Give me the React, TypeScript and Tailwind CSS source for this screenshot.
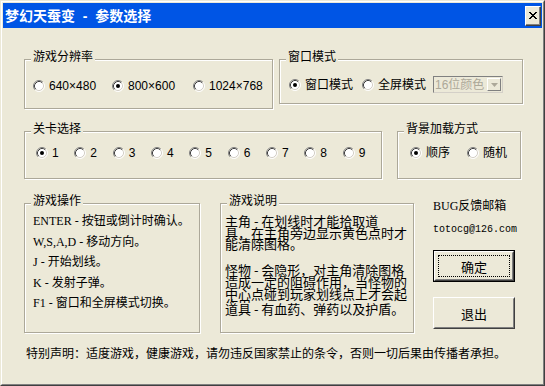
const Radio = ({ checked = false }: { checked?: boolean }) => (
  <svg width="12" height="12" viewBox="0 0 12 12" className="shrink-0">
    <circle cx="6" cy="6" r="5" fill="#fff" />
    <path d="M2.11 9.89 A5.5 5.5 0 0 1 9.89 2.11" stroke="#808080" fill="none" />
    <path d="M9.89 2.11 A5.5 5.5 0 0 1 2.11 9.89" stroke="#fff" fill="none" />
    <path d="M2.82 9.18 A4.5 4.5 0 0 1 9.18 2.82" stroke="#404040" fill="none" />
    <path d="M9.18 2.82 A4.5 4.5 0 0 1 2.82 9.18" stroke="#d4d0c8" fill="none" />
    {checked && <circle cx="6" cy="6" r="2" fill="#000" />}
  </svg>
);

const RadioItem = ({ label, checked, className }: { label: string; checked?: boolean; className?: string }) => (
  <div className={`flex items-center gap-[4px] ${className ?? ''}`}>
    <Radio checked={checked} />
    <span className="whitespace-nowrap text-[12px] leading-[14px]">{label}</span>
  </div>
);

const Group = ({ label, className, children }: { label: string; className: string; children?: React.ReactNode }) => (
  <div className={`relative border border-[#aca899] shadow-[inset_1px_1px_0_#fff,1px_1px_0_#fff] ${className}`}>
    <span className="absolute left-[6px] top-[-10px] bg-[#ece9d8] px-[2px] text-[12px] leading-[14px] whitespace-nowrap">
      {label}
    </span>
    {children}
  </div>
);

// marlett style close glyph
const CloseGlyph = () => {
  const rows = ['##....##', '.##..##.', '..####..', '...##...', '..####..', '.##..##.', '##....##'];
  return (
    <svg width="8" height="7" viewBox="0 0 8 7" shapeRendering="crispEdges">
      {rows.map((r, y) =>
        r.split('').map((c, x) => (c === '#' ? <rect key={`${x}-${y}`} x={x} y={y} width="1" height="1" fill="#000" /> : null))
      )}
    </svg>
  );
};

const levels = ['1', '2', '3', '4', '5', '6', '7', '8', '9'];

export default function App() {
  return (
    <div className="h-[386px] w-[545px] border border-t-[#ece9d8] border-l-[#ece9d8] border-r-[#404040] border-b-[#404040] font-['Liberation_Sans','Noto_Sans_CJK_SC',sans-serif] text-black">
      <div className="h-full w-full border border-t-white border-l-white border-r-[#808080] border-b-[#808080] bg-[#ece9d8] p-[1px]">
        {/* title bar */}
        <div className="flex h-[25px] items-center justify-between bg-[#0055e5] pl-[2px] pr-[1px]">
          <span className="whitespace-pre text-[14px] font-bold leading-[18px] text-white">梦幻天蚕变  -  参数选择</span>
          <div className="flex h-[20px] w-[16px] items-center justify-center border border-t-white border-l-white border-r-[#404040] border-b-[#404040] bg-[#ece9d8] shadow-[inset_-1px_-1px_0_#808080]">
            <CloseGlyph />
          </div>
        </div>

        <div className="pl-[21px] pt-[31px]">
          {/* row 1 */}
          <div className="flex items-start">
            <Group label="游戏分辨率" className="h-[50px] w-[249px]">
              <div className="flex pl-[8px] pt-[19px]">
                <RadioItem label="640×480" className="w-[79px]" />
                <RadioItem label="800×600" checked className="w-[81px]" />
                <RadioItem label="1024×768" />
              </div>
            </Group>
            <Group label="窗口模式" className="ml-[6px] h-[45px] w-[244px]">
              <div className="flex items-center pl-[9px] pt-[16px]">
                <RadioItem label="窗口模式" checked className="w-[73px]" />
                <RadioItem label="全屏模式" className="w-[71px]" />
                <div className="flex h-[17px] w-[70px] items-center border border-t-[#808080] border-l-[#808080] border-r-[#d4d0c8] border-b-[#d4d0c8] bg-[#ece9d8]">
                  <span className="flex-1 pl-[1px] text-[12px] leading-[14px] text-[#aca899] whitespace-nowrap">16位颜色</span>
                  <span className="mr-[1px] flex h-[13px] w-[14px] items-center justify-center border border-t-white border-l-white border-r-[#808080] border-b-[#808080] bg-[#ece9d8]">
                    <svg width="7" height="4" viewBox="0 0 7 4">
                      <path d="M0 0 H7 L3.5 4 Z" fill="#aca899" />
                    </svg>
                  </span>
                </div>
              </div>
            </Group>
          </div>

          {/* row 2 */}
          <div className="mt-[22px] flex items-start">
            <Group label="关卡选择" className="h-[48px] w-[358px]">
              <div className="flex pl-[11px] pt-[14px]">
                {levels.map((l) => (
                  <RadioItem key={l} label={l} checked={l === '1'} className="w-[39px]" />
                ))}
              </div>
            </Group>
            <Group label="背景加载方式" className="ml-[15px] h-[48px] w-[124px]">
              <div className="flex pl-[12px] pt-[14px]">
                <RadioItem label="顺序" checked className="w-[57px]" />
                <RadioItem label="随机" />
              </div>
            </Group>
          </div>

          {/* row 3 */}
          <div className="mt-[24px] flex items-start">
            <Group label="游戏操作" className="h-[130px] w-[176px]">
              <div className="pl-[8px] pt-[7px] font-['Liberation_Serif','Noto_Sans_CJK_SC',serif] text-[12px] leading-[20.6px] whitespace-nowrap">
                <div>ENTER - 按钮或倒计时确认。</div>
                <div>W,S,A,D - 移动方向。</div>
                <div>J - 开始划线。</div>
                <div>K - 发射子弹。</div>
                <div>F1 - 窗口和全屏模式切换。</div>
              </div>
            </Group>
            <Group label="游戏说明" className="ml-[20px] h-[130px] w-[194px]">
              <div className="pl-[4px] pt-[11px] font-['Noto_Sans_CJK_SC',sans-serif] text-[13px] leading-[11.7px] whitespace-nowrap">
                <p>
                  主角 - 在划线时才能拾取道
                  <br />
                  具，在主角旁边显示黄色点时才
                  <br />
                  能清除图格。
                </p>
                <p className="mt-[14px] h-[39px] overflow-hidden">
                  怪物 - 会隐形，对主角清除图格
                  <br />
                  造成一定的阻碍作用，当怪物的
                  <br />
                  中心点碰到玩家划线点上才会起
                  <br />
                  作用
                </p>
                <p>道具 - 有血药、弹药以及护盾。</p>
              </div>
            </Group>
            <div className="-mt-[4px] ml-[19px] flex w-[82px] flex-col">
              <span className="font-['Liberation_Serif','Noto_Sans_CJK_SC',serif] text-[12px] leading-[14px]">BUG反馈邮箱</span>
              <span className="mt-[10px] font-['Liberation_Mono',monospace] text-[10px] leading-[14px]">totocg@126.com</span>
              <button className="mt-[13px] h-[32px] w-[82px] border border-black bg-[#ece9d8] p-0">
                <div className="h-full w-full border border-t-white border-l-white border-r-[#404040] border-b-[#404040]">
                  <div className="h-full w-full border border-t-[#ece9d8] border-l-[#ece9d8] border-r-[#808080] border-b-[#808080] p-[2px]">
                    <div className="flex h-full items-center justify-center border border-dotted border-black font-['Noto_Sans_CJK_SC',sans-serif] text-[13px] leading-[15px]">
                      确定
                    </div>
                  </div>
                </div>
              </button>
              <button className="mt-[15px] h-[32px] w-[82px] border border-t-white border-l-white border-r-[#404040] border-b-[#404040] bg-[#ece9d8] p-0">
                <div className="flex h-full w-full items-center justify-center border border-t-[#ece9d8] border-l-[#ece9d8] border-r-[#808080] border-b-[#808080] font-['Noto_Sans_CJK_SC',sans-serif] text-[13px] leading-[15px]">
                  退出
                </div>
              </button>
            </div>
          </div>

          <p className="ml-[2px] mt-[13px] whitespace-nowrap font-['Noto_Sans_CJK_SC',sans-serif] text-[12px] leading-[14px]">
            特别声明：适度游戏，健康游戏，请勿违反国家禁止的条令，否则一切后果由传播者承担。
          </p>
        </div>
      </div>
    </div>
  );
}
